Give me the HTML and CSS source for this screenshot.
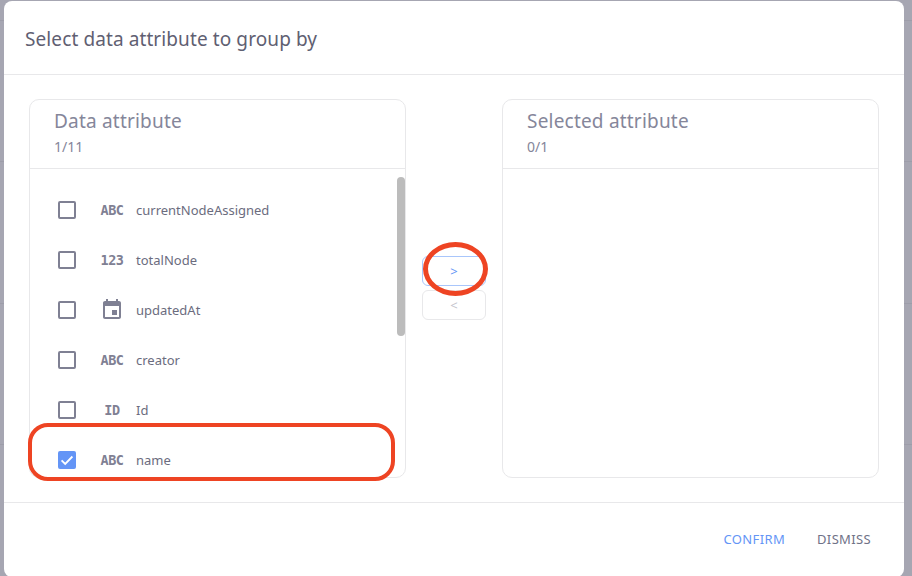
FILE: index.html
```html
<!DOCTYPE html>
<html lang="en">
<head>
<meta charset="utf-8">
<title>Select data attribute to group by</title>
<link rel="stylesheet" href="styles.css">
</head>
<body>
<div class="backdrop">
  <section class="modal">
    <header class="modal-head"><h2>Select data attribute to group by</h2></header>
    <div class="modal-body">
      <div class="panel">
        <div class="panel-head"><h3>Data attribute</h3><p>1/11</p></div>
        <div class="panel-list">
          <ul class="rows">
            <li class="row"><span class="check"></span><span class="type">ABC</span><span class="label">currentNodeAssigned</span></li>
            <li class="row"><span class="check"></span><span class="type">123</span><span class="label">totalNode</span></li>
            <li class="row"><span class="check"></span><span class="type"><svg class="cal" viewBox="0 0 24 24" width="24" height="24"><path d="M17 12h-5v5h5v-5zM16 1v2H8V1H6v2H5c-1.11 0-1.99.9-1.99 2L3 19c0 1.1.89 2 2 2h14c1.1 0 2-.9 2-2V5c0-1.1-.9-2-2-2h-1V1h-2zm3 18H5V8h14v11z"/></svg></span><span class="label">updatedAt</span></li>
            <li class="row"><span class="check"></span><span class="type">ABC</span><span class="label">creator</span></li>
            <li class="row"><span class="check"></span><span class="type">ID</span><span class="label">Id</span></li>
            <li class="row"><span class="check on"><svg viewBox="0 0 18 18" width="18" height="18"><path d="M3.6 9.4l3.6 3.5 7.2-7.4" fill="none" stroke="#fff" stroke-width="1.8"/></svg></span><span class="type">ABC</span><span class="label">name</span></li>
          </ul>
          <div class="thumb"></div>
        </div>
      </div>
      <div class="moves">
        <button class="move active">&gt;</button>
        <button class="move">&lt;</button>
      </div>
      <div class="panel">
        <div class="panel-head"><h3>Selected attribute</h3><p>0/1</p></div>
        <div class="panel-list"></div>
      </div>
    </div>
    <footer class="modal-foot">
      <button class="act primary">CONFIRM</button>
      <button class="act">DISMISS</button>
    </footer>
  </section>
  <div class="mark mark-row"></div>
  <div class="mark mark-btn"></div>
</div>
</body>
</html>
```
FILE: styles.css
```css
* { box-sizing: border-box; }
html, body { margin: 0; height: 100%; }
body { font-family: "Noto Sans", sans-serif; color: #5f6072; overflow: hidden; }
.backdrop {
  position: relative;
  width: 912px;
  height: 576px;
  padding: 1px 8px 0 4px;
  overflow: hidden;
  background-color: #a6a6b2;
  background-image: repeating-linear-gradient(to bottom, transparent 0, transparent 20px, #9d9da9 20px, #9d9da9 21px, transparent 21px, transparent 141.33px);
}
.modal {
  width: 900px;
  height: 576px;
  background: #fff;
  border-radius: 8px;
  display: flex;
  flex-direction: column;
}
.modal-head {
  height: 74px;
  flex: none;
  padding: 2px 21px 0;
  display: flex;
  align-items: center;
  border-bottom: 1px solid #e8e8ea;
}
.modal-head h2 { margin: 0; font-size: 19px; letter-spacing: .1px; font-weight: 400; color: #5f6072; }
.modal-body {
  display: flex;
  flex: none;
  height: 428px;
  padding: 24px 25px;
  border-bottom: 1px solid #e8e8ea;
}
.panel {
  width: 377px;
  height: 379px;
  flex: none;
  border: 1px solid #e8e8ea;
  border-radius: 10px;
  display: flex;
  flex-direction: column;
  overflow: hidden;
}
.panel-head {
  height: 69px;
  flex: none;
  padding: 8px 24px 0;
  border-bottom: 1px solid #e8e8ea;
}
.panel-head h3 { margin: 0; font-size: 19px; letter-spacing: .2px; line-height: 26px; font-weight: 400; color: #85869a; }
.panel-head p { margin: 5px 0 0; font-size: 14px; line-height: 16px; color: #85869a; }
.panel-list { position: relative; flex: 1; min-height: 0; overflow: hidden; }
.rows { list-style: none; margin: 0; padding: 16px 0 0; }
.row { height: 50px; display: flex; align-items: center; padding-left: 28px; }
.check { width: 18px; height: 18px; flex: none; border: 2px solid #7f8093; border-radius: 2px; }
.check.on { border: none; background: #6495f6; }
.check svg { display: block; }
.type {
  width: 48px;
  margin-left: 12px;
  flex: none;
  display: flex;
  justify-content: center;
  font-family: "DejaVu Sans Mono", monospace;
  font-weight: 700;
  font-size: 13.5px;
  letter-spacing: -.4px;
  color: #7f8093;
}
.cal { fill: #7f8093; display: block; }
.label { font-size: 13px; color: #6b6c7e; }
.thumb {
  position: absolute;
  top: 8px;
  right: 0;
  width: 8px;
  height: 159px;
  border-radius: 4px;
  background: #bcbcbc;
}
.moves {
  width: 96px;
  flex: none;
  display: flex;
  flex-direction: column;
  align-items: center;
  gap: 4px;
  padding-top: 157px;
}
.move {
  width: 64px;
  height: 30px;
  padding: 0;
  background: #fff;
  border: 1px solid #e8e8ea;
  border-radius: 6px;
  font: 400 13px "Noto Sans", sans-serif;
  color: #c4c4cc;
}
.move.active { border-color: #a9c6fb; color: #6495f6; }
.modal-foot {
  flex: none;
  height: 74px;
  display: flex;
  justify-content: flex-end;
  align-items: center;
  padding: 0 33px 2px 0;
  gap: 32px;
}
.act {
  padding: 0;
  border: 0;
  background: none;
  font: 400 13px "Noto Sans", sans-serif;
  letter-spacing: .35px;
  color: #6f7287;
}
.act.primary { color: #6495f6; }
.mark { position: absolute; border-style: solid; border-color: #ee4423; }
.mark-row { left: 28px; top: 423px; width: 367px; height: 58px; border-width: 4px; border-radius: 20px; }
.mark-btn { left: 423px; top: 242px; width: 65px; height: 54px; border-width: 5px; border-radius: 50%; }
```
